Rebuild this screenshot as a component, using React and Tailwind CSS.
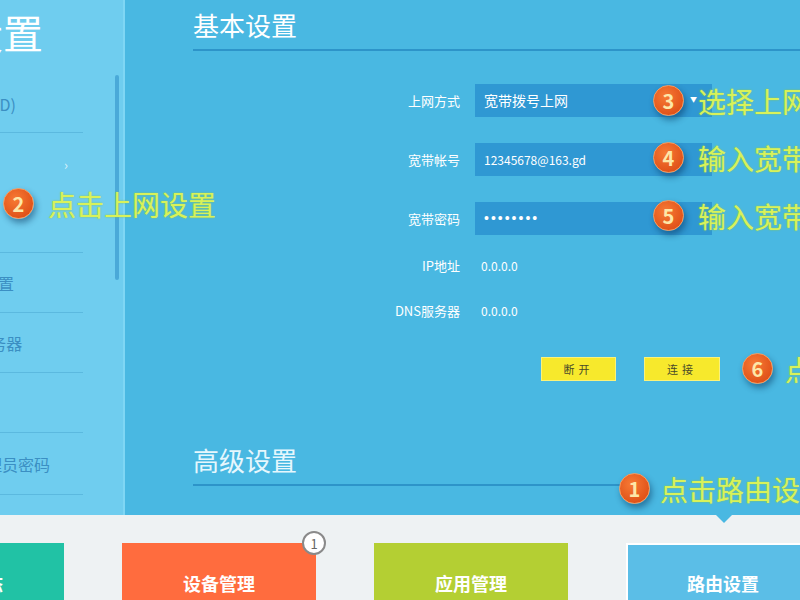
import React from 'react';

const Badge = ({ n }) => (
  <div className="w-[31px] h-[31px] shrink-0 rounded-full bg-[radial-gradient(circle_at_40%_35%,#f77a35,#d8440f)] border border-[#f59a5e] shadow-[2px_4px_6px_rgba(0,40,80,0.45)] flex items-center justify-center text-[#fde7a8] text-[20px] font-bold leading-none">
    {n}
  </div>
);

const Callout = ({ n, text, className, gap = 'gap-[14px]' }) => (
  <div className={`absolute flex items-center ${gap} ${className}`}>
    <Badge n={n} />
    <span className="text-[28px] leading-none text-[#d8f25a] whitespace-nowrap [text-shadow:0_0_2px_#8fc94a]">
      {text}
    </span>
  </div>
);

const FormRow = ({ label, children, className = '' }) => (
  <div className={`flex items-center h-[33px] ${className}`}>
    <div className="w-[282px] pr-[15px] text-right text-[13px] text-white">{label}</div>
    {children}
  </div>
);

const Input = ({ value, arrow, mono, cjk }) => (
  <div className="w-[237px] h-[33px] bg-[#2f98d3] flex items-center pl-[9px] text-[12px] text-white relative">
    <span
      className={
        mono
          ? "font-['Liberation_Sans',sans-serif] text-[14px] tracking-[2px]"
          : cjk
          ? 'text-[14px]'
          : ''
      }
    >
      {value}
    </span>
    {arrow && <span className="absolute left-[215px] top-[10px] text-[7px] text-white">▼</span>}
  </div>
);

const sideItems = [
  { h: 'h-[58px]', text: 'SSID)', ml: '-ml-[24px]' },
  { h: 'h-[120px]', chevron: true },
  { h: 'h-[60px]', text: '线设置', ml: '-ml-[34px]' },
  { h: 'h-[60px]', text: 'P服务器', ml: '-ml-[36px]' },
  { h: 'h-[60px]', text: '' },
  { h: 'h-[62px]', text: '理员密码', ml: '-ml-[14px]' },
];

export default function App() {
  return (
    <div className="w-[800px] h-[600px] overflow-hidden bg-[#eef2f3] flex flex-col font-['Noto_Sans_CJK_SC',sans-serif]">
      <div className="h-[515px] shrink-0 flex relative">
        {/* Sidebar */}
        <aside className="w-[125px] shrink-0 bg-[#6fcdef] border-r-[2px] border-[#7fd6f4] relative overflow-hidden">
          <div className="-ml-[37px] mt-[8px] text-[40px] leading-[48px] text-white whitespace-nowrap">设置</div>
          <div className="mt-[19px] w-[83px]">
            {sideItems.map((it, i) => (
              <div key={i} className={`${it.h} border-b border-[#5bb9df] flex items-center relative`}>
                {it.text && (
                  <span className={`${it.ml} text-[16px] text-[#3b8fc3] whitespace-nowrap`}>{it.text}</span>
                )}
                {it.chevron && (
                  <span className="absolute left-[64px] top-[22px] text-[13px] text-[#d8f1fb]">›</span>
                )}
              </div>
            ))}
          </div>
          <div className="absolute left-[115px] top-[75px] w-[4px] h-[205px] bg-[#4aa9d8] rounded-sm" />
        </aside>

        {/* Main */}
        <main className="flex-1 bg-[#49b8e2] pl-[68px] relative">
          <div className="pt-[9px] pb-[9px] border-b-[2px] border-[#2d94c9]">
            <h2 className="text-[26px] leading-[31px] text-white">基本设置</h2>
          </div>

          <div className="mt-[33px]">
            <FormRow label="上网方式">
              <Input value="宽带拨号上网" arrow cjk />
            </FormRow>
            <FormRow label="宽带帐号" className="mt-[26px]">
              <Input value="12345678@163.gd" />
            </FormRow>
            <FormRow label="宽带密码" className="mt-[26px]">
              <Input value="••••••••" mono />
            </FormRow>
            <FormRow label="IP地址" className="mt-[14px]">
              <span className="pl-[6px] text-[12px] text-white">0.0.0.0</span>
            </FormRow>
            <FormRow label="DNS服务器" className="mt-[12px]">
              <span className="pl-[6px] text-[12px] text-white">0.0.0.0</span>
            </FormRow>
          </div>

          <div className="mt-[30px] ml-[348px] flex gap-[28px]">
            <button className="w-[75px] h-[24px] bg-[#f7e92c] border border-[#fbf27a] text-[11px] text-[#4a4a2a] tracking-[4px]">断开</button>
            <button className="w-[76px] h-[24px] bg-[#f7e92c] border border-[#fbf27a] text-[11px] text-[#4a4a2a] tracking-[4px]">连接</button>
          </div>

          <div className="mt-[63px] w-[427px] pb-[9px] border-b-[2px] border-[#2d94c9]">
            <h2 className="text-[26px] leading-[31px] text-[#e6f7fd]">高级设置</h2>
          </div>

          <Callout n="3" text="选择上网方式" className="left-[528px] top-[85px]" />
          <Callout n="4" text="输入宽带帐号" className="left-[528px] top-[142px]" />
          <Callout n="5" text="输入宽带密码" className="left-[528px] top-[200px]" />
          <Callout n="6" text="点击连接" className="left-[617px] top-[353px]" gap="gap-[12px]" />
          <Callout n="1" text="点击路由设置" className="left-[494px] top-[473px]" gap="gap-[10px]" />
        </main>

        <Callout n="2" text="点击上网设置" className="left-[3px] top-[188px]" />
      </div>

      {/* Bottom tiles */}
      <div className="flex-1 min-h-0 overflow-hidden relative">
        <div className="absolute left-[716px] top-0 w-0 h-0 border-l-[8px] border-r-[8px] border-t-[8px] border-l-transparent border-r-transparent border-t-[#49b8e2]" />
        <div className="flex gap-[58px] -ml-[130px] pt-[28px]">
          <div className="w-[194px] h-[80px] shrink-0 bg-[#21c2a5] pt-[28px] text-center text-[18px] leading-[24px] font-bold text-white">运行状态</div>
          <div className="w-[194px] h-[80px] shrink-0 bg-[#ff6c3e] pt-[28px] text-center text-[18px] leading-[24px] font-bold text-white relative">
            设备管理
            <div className="absolute -right-[10px] -top-[12px] w-[24px] h-[24px] rounded-full bg-white border-2 border-[#8a8a8a] flex items-center justify-center text-[13px] font-normal text-[#666] leading-none">1</div>
          </div>
          <div className="w-[194px] h-[80px] shrink-0 bg-[#b4cf33] pt-[28px] text-center text-[18px] leading-[24px] font-bold text-white">应用管理</div>
          <div className="w-[194px] h-[80px] shrink-0 bg-[#5bbee7] border-2 border-white pt-[26px] text-center text-[18px] leading-[24px] font-bold text-white">路由设置</div>
        </div>
      </div>
    </div>
  );
}
